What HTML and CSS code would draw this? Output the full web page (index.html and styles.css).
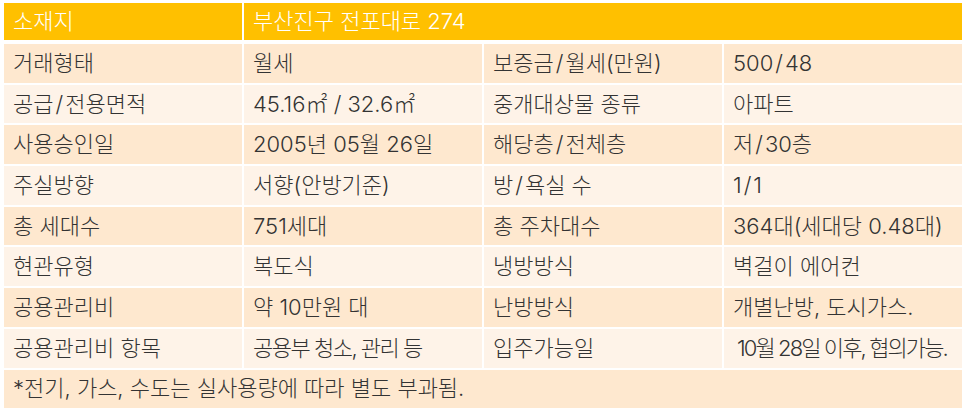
FILE: index.html
```html
<!DOCTYPE html>
<html lang="ko">
<head>
<meta charset="utf-8">
<title>매물 정보</title>
<link rel="stylesheet" href="styles.css">
</head>
<body>
<div class="sheet">
  <div class="head">
    <div class="cell">소재지</div>
    <div class="cell span3">부산진구 전포대로 274</div>
  </div>
  <div class="body">
    <div class="cell odd">거래형태</div>
    <div class="cell odd">월세</div>
    <div class="cell odd">보증금<span class="sl">/</span>월세(만원)</div>
    <div class="cell odd">500<span class="sl">/</span>48</div>

    <div class="cell even">공급<span class="sl">/</span>전용면적</div>
    <div class="cell even">45.16㎡ / 32.6㎡</div>
    <div class="cell even">중개대상물 종류</div>
    <div class="cell even">아파트</div>

    <div class="cell odd">사용승인일</div>
    <div class="cell odd">2005년 05월 26일</div>
    <div class="cell odd">해당층<span class="sl">/</span>전체층</div>
    <div class="cell odd">저<span class="sl">/</span>30층</div>

    <div class="cell even">주실방향</div>
    <div class="cell even">서향(안방기준)</div>
    <div class="cell even">방<span class="sl">/</span>욕실 수</div>
    <div class="cell even">1<span class="sl">/</span>1</div>

    <div class="cell odd">총 세대수</div>
    <div class="cell odd">751세대</div>
    <div class="cell odd">총 주차대수</div>
    <div class="cell odd">364대(세대당 0.48대)</div>

    <div class="cell even">현관유형</div>
    <div class="cell even">복도식</div>
    <div class="cell even">냉방방식</div>
    <div class="cell even">벽걸이 에어컨</div>

    <div class="cell odd">공용관리비</div>
    <div class="cell odd">약 10만원 대</div>
    <div class="cell odd">난방방식</div>
    <div class="cell odd">개별난방, 도시가스.</div>

    <div class="cell even">공용관리비 항목</div>
    <div class="cell even tight">공용부 청소, 관리 등</div>
    <div class="cell even">입주가능일</div>
    <div class="cell even tighter indent">10월 28일 이후, 협의가능.</div>

    <div class="cell odd span4">*전기, 가스, 수도는 실사용량에 따라 별도 부과됨.</div>
  </div>
</div>
</body>
</html>
```

FILE: styles.css
```css
html, body {
  margin: 0;
  padding: 0;
  background: #ffffff;
}

body {
  font-family: "Inter", "Noto Sans CJK KR", "Noto Sans", sans-serif;
  font-weight: 300;
  font-size: 22px;
  color: #333333;
}

.sheet {
  width: 958px;
  margin: 3px 0 0 4px;
}

.head,
.body {
  display: grid;
  grid-template-columns: repeat(4, 1fr);
  column-gap: 2px;
  row-gap: 2px;
}

.head {
  grid-template-rows: 37px;
  margin-bottom: 4px;
}

.body {
  grid-template-rows: repeat(9, 38.7px);
}

.cell {
  display: flex;
  align-items: center;
  padding: 0 0 1px 9px;
  white-space: nowrap;
  overflow: hidden;
  line-height: 1;
}

.sl {
  margin: 0 2px;
}

.head .cell {
  background: #ffc000;
  color: #ffffff;
}

.span3 {
  grid-column: span 3;
}

.span4 {
  grid-column: span 4;
}

.odd {
  background: #fee8cf;
}

.even {
  background: #fef3e8;
}

.tight {
  letter-spacing: -1.5px;
}

.tighter {
  letter-spacing: -1.9px;
}

.indent {
  padding-left: 13px;
}
```
